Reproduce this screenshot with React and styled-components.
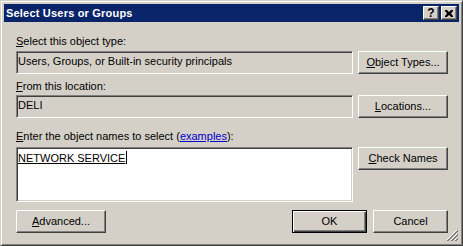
import React from "react";
import styled, { createGlobalStyle } from "styled-components";

const FACE = "#D4D0C8";

const GlobalStyle = createGlobalStyle`
  html, body {
    margin: 0;
    padding: 0;
    background: ${FACE};
  }
  body {
    font-family: "Liberation Sans", Arial, sans-serif;
    font-size: 11px;
    color: #000;
  }
`;

const Window = styled.div`
  position: relative;
  box-sizing: border-box;
  width: 463px;
  height: 246px;
  padding: 3px;
  background: ${FACE};
  border: 1px solid;
  border-color: ${FACE} #404040 #404040 ${FACE};
  box-shadow: inset 1px 1px #fff, inset -1px -1px #808080;
  display: flex;
  flex-direction: column;
`;

const TitleBar = styled.div`
  height: 18px;
  background: #0a246a;
  display: flex;
  align-items: center;
  padding: 0 2px;
`;

const Title = styled.div`
  flex: 1;
  color: #fff;
  font-weight: bold;
  font-size: 11px;
  letter-spacing: 0.2px;
  line-height: 13px;
`;

const CaptionButton = styled.div`
  box-sizing: border-box;
  width: 16px;
  height: 14px;
  margin-left: ${(p) => p.gap || 0}px;
  background: ${FACE};
  border: 1px solid;
  border-color: #fff #404040 #404040 #fff;
  box-shadow: inset -1px -1px #808080;
  display: flex;
  align-items: center;
  justify-content: center;
  font-weight: bold;
  font-size: 12px;
  line-height: 11px;
`;

const Body = styled.div`
  flex: 1;
  padding: 13px 11px 0 12px;
`;

const Grid = styled.div`
  display: grid;
  grid-template-columns: 337px 90px;
  column-gap: 5px;
  align-items: start;
`;

const Label = styled.div`
  grid-column: 1;
  line-height: 13px;
  height: 13px;
  margin-top: ${(p) => p.top || 0}px;
  margin-bottom: ${(p) => p.bottom || 3}px;
  white-space: nowrap;
`;

const Field = styled.div`
  grid-column: 1;
  box-sizing: border-box;
  height: ${(p) => p.h || 23}px;
  padding: 3px 2px 3px 1px;
  line-height: 13px;
  background: ${(p) => (p.white ? "#fff" : FACE)};
  border: 1px solid;
  border-color: #808080 #fff #fff #808080;
  box-shadow: inset 1px 1px #404040, inset -1px -1px ${FACE};
  white-space: nowrap;
`;

const Button = styled.button`
  box-sizing: border-box;
  width: ${(p) => p.w || 90}px;
  height: 23px;
  padding: 0;
  margin: 0;
  font-family: inherit;
  font-size: 11px;
  color: #000;
  background: ${FACE};
  border: 1px solid;
  border-color: ${(p) =>
    p.default ? "#000" : "#fff #404040 #404040 #fff"};
  box-shadow: ${(p) =>
    p.default
      ? "inset 1px 1px #fff, inset -1px -1px #404040, inset -2px -2px #808080"
      : "inset -1px -1px #808080"};
  text-align: center;
  line-height: 13px;
`;

const Link = styled.span`
  color: #0000cc;
  text-decoration: underline;
`;

const Resolved = styled.span`
  text-decoration: underline;
  text-underline-offset: 1px;
`;

const Caret = styled.span`
  display: inline-block;
  width: 1px;
  height: 13px;
  margin-left: 1px;
  background: #000;
  vertical-align: -2px;
`;

const Footer = styled.div`
  display: flex;
  align-items: center;
  gap: 6px;
  margin-top: 8px;
`;

const Spacer = styled.div`
  flex: 1;
`;

const Grip = styled.svg`
  position: absolute;
  right: 4px;
  bottom: 4px;
`;

export default function App() {
  return (
    <>
      <GlobalStyle />
      <Window>
        <TitleBar>
          <Title>Select Users or Groups</Title>
          <CaptionButton>?</CaptionButton>
          <CaptionButton gap={2}>
            <svg width="8" height="7" viewBox="0 0 8 7">
              <path
                d="M0 0h2l2 2 2-2h2v1l-2 2.5 2 2.5v1h-2l-2-2-2 2h-2v-1l2-2.5-2-2.5z"
                fill="#000"
              />
            </svg>
          </CaptionButton>
        </TitleBar>
        <Body>
          <Grid>
            <Label>
              <u>S</u>elect this object type:
            </Label>
            <Field>Users, Groups, or Built-in security principals</Field>
            <Button>
              <u>O</u>bject Types...
            </Button>
            <Label top={6} bottom={2}>
              <u>F</u>rom this location:
            </Label>
            <Field>DELI</Field>
            <Button>
              <u>L</u>ocations...
            </Button>
            <Label top={12} bottom={4}>
              <u>E</u>nter the object names to select (<Link>examples</Link>):
            </Label>
            <Field white h={55}>
              <Resolved>NETWORK SERVICE</Resolved>
              <Caret />
            </Field>
            <Button>
              <u>C</u>heck Names
            </Button>
          </Grid>
          <Footer>
            <Button>
              <u>A</u>dvanced...
            </Button>
            <Spacer />
            <Button default w={75}>
              OK
            </Button>
            <Button w={75}>Cancel</Button>
          </Footer>
        </Body>
        <Grip width="12" height="12" viewBox="0 0 12 12">
          <path d="M11 1L1 11M11 5L5 11M11 9L9 11" stroke="#fff" />
          <path d="M12 1L1 12M12 2L2 12M12 5L5 12M12 6L6 12M12 9L9 12M12 10L10 12" stroke="#808080" />
        </Grip>
      </Window>
    </>
  );
}
